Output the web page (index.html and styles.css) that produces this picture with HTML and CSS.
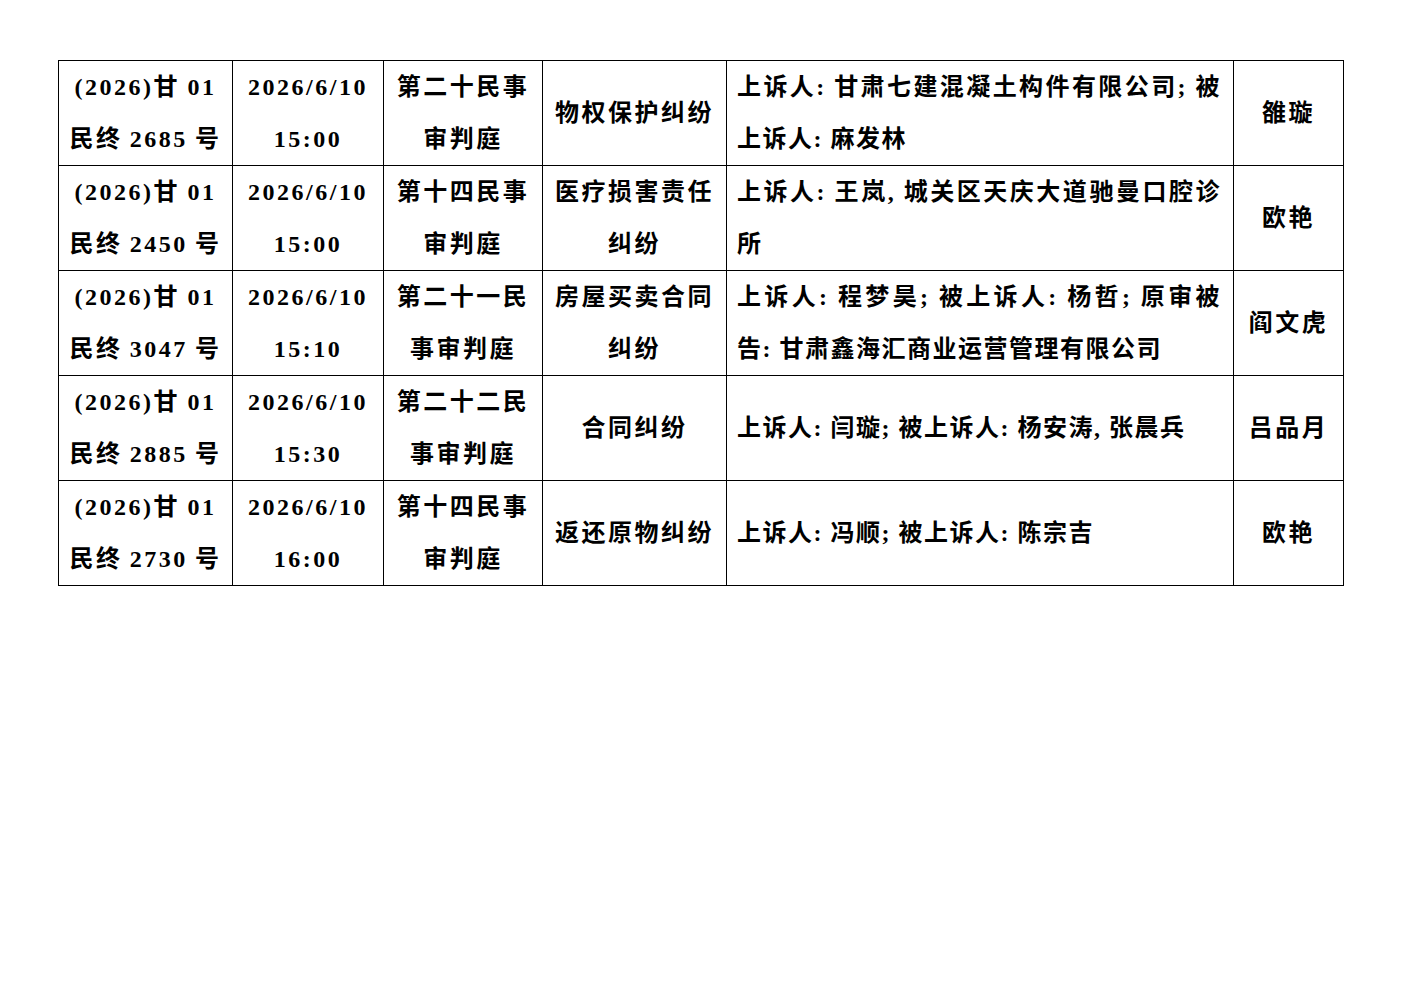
FILE: index.html
```html
<!DOCTYPE html>
<html lang="zh-CN">
<head>
<meta charset="utf-8">
<title>开庭公告</title>
<link rel="stylesheet" href="styles.css">
</head>
<body>
<table class="schedule">
  <colgroup>
    <col class="c-case">
    <col class="c-time">
    <col class="c-court">
    <col class="c-cause">
    <col class="c-party">
    <col class="c-judge">
  </colgroup>
  <tbody>
    <tr>
      <td class="case">(2026)甘&#8201;01民终&#8201;2685&#8201;号</td>
      <td>2026/6/10 15:00</td>
      <td>第二十民事审判庭</td>
      <td>物权保护纠纷</td>
      <td class="party">上诉人: 甘肃七建混凝土构件有限公司; 被上诉人: 麻发林</td>
      <td>雒璇</td>
    </tr>
    <tr>
      <td class="case">(2026)甘&#8201;01民终&#8201;2450&#8201;号</td>
      <td>2026/6/10 15:00</td>
      <td>第十四民事审判庭</td>
      <td>医疗损害责任纠纷</td>
      <td class="party">上诉人: 王岚, 城关区天庆大道驰曼口腔诊所</td>
      <td>欧艳</td>
    </tr>
    <tr>
      <td class="case">(2026)甘&#8201;01民终&#8201;3047&#8201;号</td>
      <td>2026/6/10 15:10</td>
      <td>第二十一民事审判庭</td>
      <td>房屋买卖合同纠纷</td>
      <td class="party">上诉人: 程梦昊; 被上诉人: 杨哲; 原审被告: 甘肃鑫海汇商业运营管理有限公司</td>
      <td>阎文虎</td>
    </tr>
    <tr>
      <td class="case">(2026)甘&#8201;01民终&#8201;2885&#8201;号</td>
      <td>2026/6/10 15:30</td>
      <td>第二十二民事审判庭</td>
      <td>合同纠纷</td>
      <td class="party">上诉人: 闫璇; 被上诉人: 杨安涛, 张晨兵</td>
      <td>吕品月</td>
    </tr>
    <tr>
      <td class="case">(2026)甘&#8201;01民终&#8201;2730&#8201;号</td>
      <td>2026/6/10 16:00</td>
      <td>第十四民事审判庭</td>
      <td>返还原物纠纷</td>
      <td class="party">上诉人: 冯顺; 被上诉人: 陈宗吉</td>
      <td>欧艳</td>
    </tr>
  </tbody>
</table>
</body>
</html>
```

FILE: styles.css
```css
html, body {
  margin: 0;
  padding: 0;
  background: #ffffff;
}

body {
  padding: 60px 0 0 58px;
  font-family: "Liberation Serif", "Noto Sans CJK SC", serif;
  font-weight: 700;
  font-size: 24px;
  color: #000;
}

.schedule {
  border-collapse: collapse;
  table-layout: fixed;
  width: 1285px;
}

.c-case { width: 174px; }
.c-time { width: 151px; }
.c-court { width: 159px; }
.c-cause { width: 184px; }
.c-party { width: 507px; }
.c-judge { width: 110px; }

.schedule td {
  border: 1px solid #000;
  height: 104px;
  padding: 0 6px;
  box-sizing: border-box;
  text-align: center;
  vertical-align: middle;
  line-height: 52px;
  letter-spacing: 2.5px;
}

.schedule td.case {
  padding: 0 8px;
}

.schedule td.party {
  text-align: justify;
  letter-spacing: 1.5px;
  padding: 0 12px 0 10px;
}
```
